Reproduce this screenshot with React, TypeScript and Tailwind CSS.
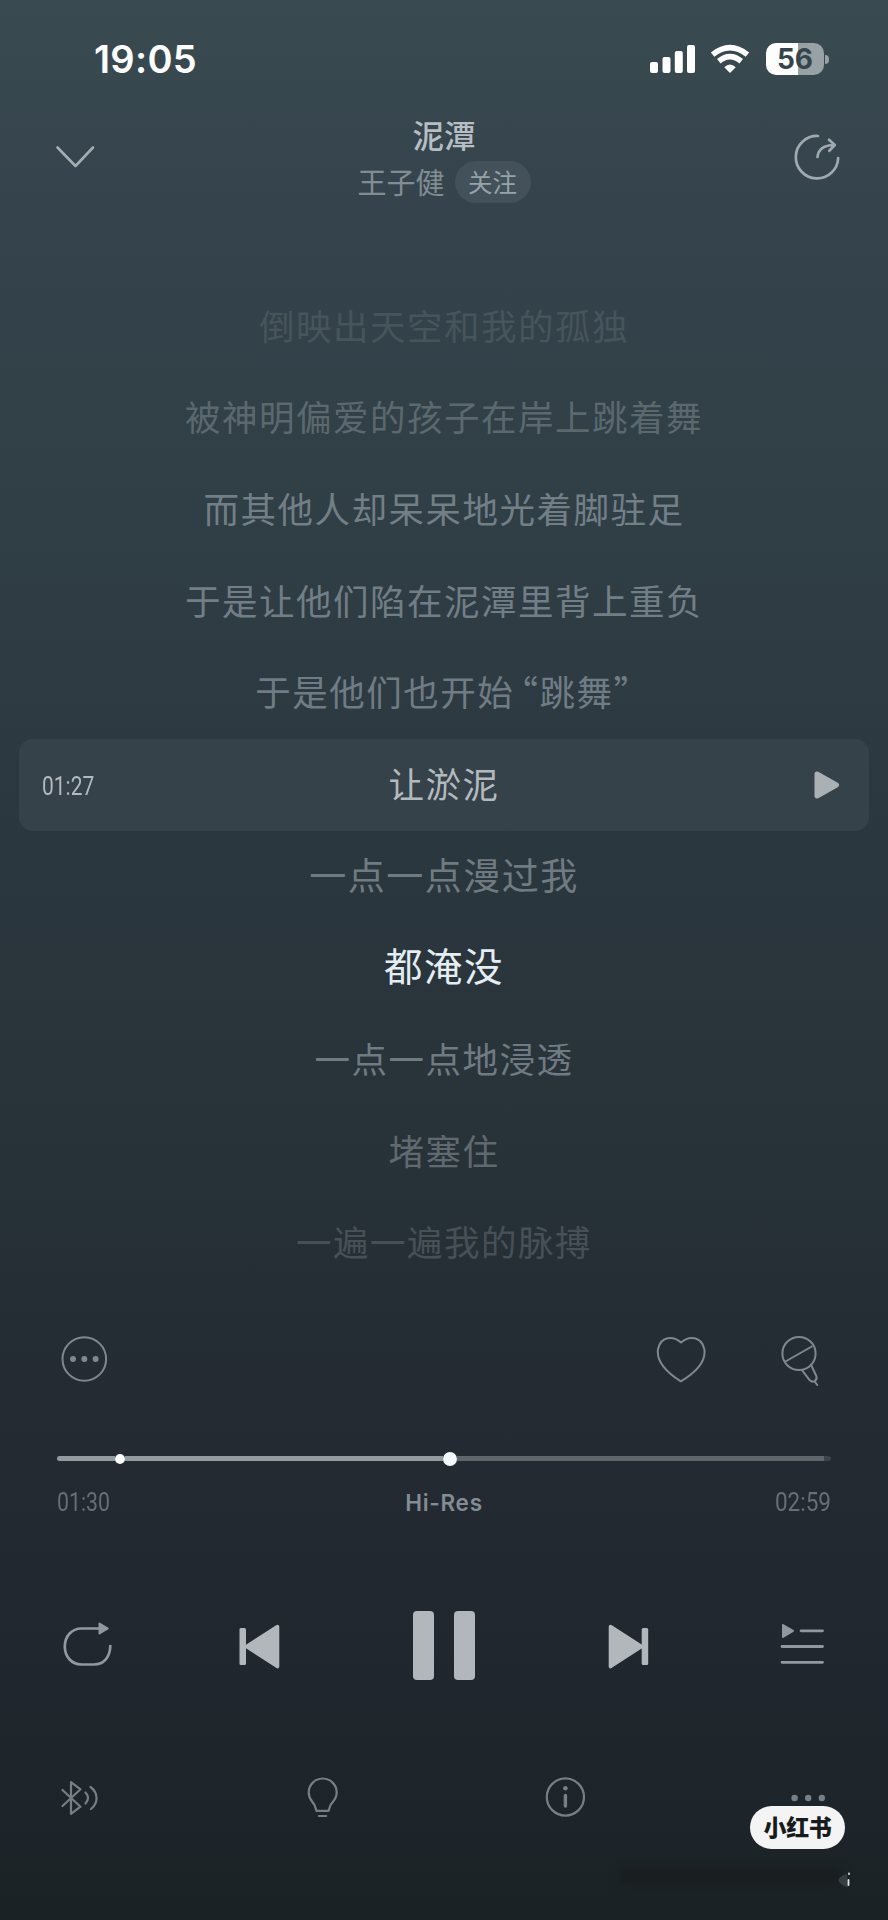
import type { ReactNode } from "react";

type IconProps = { box: string; className: string; children: ReactNode };

function Icon({ box, className, children }: IconProps) {
  return (
    <svg
      viewBox={box}
      className={`block shrink-0 ${className}`}
      fill="none"
      stroke="currentColor"
      strokeLinecap="round"
      strokeLinejoin="round"
    >
      {children}
    </svg>
  );
}

function StatusBar() {
  return (
    <div className="flex h-[96px] items-start justify-between pl-[94px] pr-[59px] text-white">
      <div className="mt-[36px] font-['Inter'] text-[38px] font-semibold leading-[46px] tracking-[0.3px]">19:05</div>
      <div className="mt-[43px] flex items-start">
        <Icon box="649 43 46 32" className="h-[32px] w-[46px]">
          <g fill="currentColor" stroke="none">
            <rect x="649" y="62" width="8" height="11" rx="2" />
            <rect x="661.5" y="57" width="8" height="16" rx="2" />
            <rect x="673.8" y="51" width="8" height="22" rx="2" />
            <rect x="686" y="45" width="8" height="28" rx="2" />
          </g>
        </Icon>
        <Icon box="710 43 40 32" className="ml-[14px] h-[32px] w-[40px]">
          <g strokeLinecap="butt" strokeWidth="5.6">
            <path d="M712.6 54.6 Q730 40.6 747.4 54.6" />
            <path d="M718.8 61.2 Q730 52.2 741.2 61.2" />
          </g>
          <path d="M730 73 L724.3 67.2 Q730 62 735.7 67.2 Z" fill="currentColor" stroke="none" />
        </Icon>
        <div className="ml-[16px] flex items-center">
          <div className="flex h-[32px] w-[58px] items-center justify-center rounded-[10px] bg-linear-to-r from-white from-[56%] to-[#98a1a4] to-[56%] font-['Inter'] text-[28px] font-bold leading-none tracking-[0px] text-[#36454d]">
            56
          </div>
          <div className="ml-[1px] h-[9px] w-[4px] rounded-r-full bg-[#98a1a4]" />
        </div>
      </div>
    </div>
  );
}

function Header() {
  return (
    <div className="flex h-[185px] items-start justify-between pl-[53px] pr-[46px]">
      <Icon box="53 142 45 30" className="mt-[46px] h-[30px] w-[45px] text-[#a3adb3]">
        <path d="M57.5 147.5 L75.5 166 L93 147.5" strokeWidth="2.6" />
      </Icon>
      <div className="ml-[-2px] flex flex-col items-center">
        <div className="mt-[17px] h-[42px] text-[31.5px] font-medium leading-[42px] text-[#b7bec3]">泥潭</div>
        <div className="mt-[6px] flex h-[42px] items-center">
          <span className="mt-[-2px] text-[29px] leading-[42px] text-[#828d93]">王子健</span>
          <span className="ml-[10px] flex h-[42px] w-[76px] items-center justify-center rounded-full bg-[#43515a] text-[24.5px] text-[#98a2a9]">
            关注
          </span>
        </div>
      </div>
      <Icon box="792 132 50 50" className="mt-[36px] h-[50px] w-[50px] text-[#a0a9af]">
        <path d="M818 136 A21.2 21.2 0 1 0 838.2 158" strokeWidth="2.7" />
        <path d="M817.5 157 Q818.5 145.5 834 145 M829 139.8 L834.8 145 L829.3 150.8" strokeWidth="2.7" />
      </Icon>
    </div>
  );
}

const rows = "flex h-[91.7px] items-center justify-center pb-[5px]";

function Lyrics() {
  return (
    <div className="flex flex-col text-[35.5px] font-normal leading-none tracking-[1.5px]">
      <div className={`${rows} text-[#46545b]`}>倒映出天空和我的孤独</div>
      <div className={`${rows} text-[#5b686e]`}>被神明偏爱的孩子在岸上跳着舞</div>
      <div className={`${rows} text-[#727f86]`}>而其他人却呆呆地光着脚驻足</div>
      <div className={`${rows} text-[#727e86]`}>于是让他们陷在泥潭里背上重负</div>
      <div className={`${rows} text-[#707c85]`}>
        <span>于是他们也开始</span>
        <span className="ml-[6px] [font-feature-settings:'halt']">“</span>
        <span>跳舞</span>
        <span className="[font-feature-settings:'halt']">”</span>
      </div>
      <div className="mx-[19px] flex h-[91.7px] items-center justify-between rounded-[14px] bg-[#36424a] pl-[23px] pr-[27px] text-[#b3babe]">
        <span className="mt-[3px] w-[60px] origin-left scale-x-[0.84] font-['Roboto'] text-[25px] font-normal tracking-[0px]">01:27</span>
        <span className="ml-[-26px] mt-[-5px]">让淤泥</span>
        <Icon box="812 768 30 36" className="h-[36px] w-[30px] text-[#aab1b5]">
          <path d="M817 775 L836.5 786 L817 797 Z" fill="currentColor" strokeWidth="5" />
        </Icon>
      </div>
      <div className={`${rows} text-[37px] text-[#707b81]`}>一点一点漫过我</div>
      <div className="flex h-[91.7px] items-center justify-center pb-[8px] text-[38.5px] text-[#e4edf2]">都淹没</div>
      <div className={`${rows} text-[#707a82]`}>一点一点地浸透</div>
      <div className={`${rows} text-[#60696f]`}>堵塞住</div>
      <div className={`${rows} text-[#474f57]`}>一遍一遍我的脉搏</div>
    </div>
  );
}

function Actions() {
  return (
    <div className="mt-[39px] flex h-[60px] items-center pl-[60px] pr-[64px] text-[#7f888f]">
      <Icon box="60 1335 48 48" className="h-[48px] w-[48px]">
        <circle cx="84.3" cy="1359" r="21.8" strokeWidth="2" />
        <g fill="currentColor" stroke="none">
          <circle cx="73" cy="1359" r="3" />
          <circle cx="84.3" cy="1359" r="3" />
          <circle cx="95.6" cy="1359" r="3" />
        </g>
      </Icon>
      <Icon box="654 1333 54 52" className="ml-auto h-[52px] w-[54px]">
        <path
          d="M681 1342.500 C673 1335.200 660.500 1336.500 658 1349 C656 1362 667 1372.500 680.800 1381.300 C695.500 1372.500 706.500 1362 704.300 1349 C701.500 1336.500 689.500 1335.200 681 1342.500 Z"
          strokeWidth="2"
        />
      </Icon>
      <Icon box="779 1332 45 54" className="ml-[71px] h-[54px] w-[45px]">
        <g strokeWidth="2">
          <circle cx="799" cy="1353.500" r="16.600" />
          <path d="M785.500 1361.500 L811.800 1346.500" />
          <path d="M802 1370.200 L809.800 1380.300 Q812.300 1382.600 815 1380.900 Q817.400 1379 816.300 1376 L811 1364.800" />
          <path d="M814.800 1381.500 L817.200 1385" />
        </g>
      </Icon>
    </div>
  );
}

function Progress() {
  return (
    <div className="mt-[63px] pl-[57px] pr-[57px]">
      <div className="flex h-[14px] items-center">
        <div className="h-[5px] w-[58px] rounded-l-full bg-[#949b9f]" />
        <div className="h-[10px] w-[10px] rounded-full bg-white" />
        <div className="h-[5px] w-[318px] bg-[#949b9f]" />
        <div className="h-[14px] w-[14px] rounded-full bg-[#f5fafc]" />
        <div className="h-[5px] w-[367px] bg-[#5f666c]" />
        <div className="h-[5px] flex-1 rounded-r-full bg-[#3c4349]" />
      </div>
      <div className="mt-[22px] flex h-[30px] items-center justify-between text-[#666f75]">
        <span className="w-[70px] origin-left scale-x-[0.85] font-['Roboto'] text-[25px] leading-[30px]">01:30</span>
        <span className="font-['Inter'] text-[22.500px] font-semibold leading-[30px] tracking-[0.700px] text-[#838c92]">Hi-Res</span>
        <span className="w-[70px] origin-right scale-x-[0.900] text-right font-['Roboto'] text-[25px] leading-[30px]">02:59</span>
      </div>
    </div>
  );
}

function Transport() {
  return (
    <div className="mt-[88px] flex h-[80px] items-center pl-[60px] pr-[60px] text-[#b1b7bb]">
      <Icon box="60 1617 54 56" className="h-[56px] w-[54px] text-[#91989e]">
        <path d="M99 1627.500 H81.500 C71.500 1627.500 64.800 1635.500 64.800 1645.500 C64.800 1655.500 71.500 1663.500 81.500 1663.500 H94 C104 1663.500 110 1656 110.300 1645" strokeWidth="2.700" />
        <path d="M99.500 1622.500 L107.800 1627.500 L99.500 1632.500 Z" fill="currentColor" strokeWidth="2" />
      </Icon>
      <Icon box="236 1617 46 56" className="ml-[122px] h-[56px] w-[46px]">
        <g fill="currentColor">
          <rect x="239.500" y="1627" width="6.500" height="37" rx="1.500" stroke="none" />
          <path d="M277.500 1625.500 L246.500 1645.500 L277.500 1665.500 Z" strokeWidth="3.600" />
        </g>
      </Icon>
      <div className="ml-[131px] flex gap-[20px]">
        <div className="h-[69px] w-[21px] rounded-[4px] bg-current" />
        <div className="h-[69px] w-[21px] rounded-[4px] bg-current" />
      </div>
      <Icon box="605 1617 46 56" className="ml-[130px] h-[56px] w-[46px]">
        <g fill="currentColor">
          <rect x="641.700" y="1627" width="6.500" height="37" rx="1.500" stroke="none" />
          <path d="M610.500 1625.500 L641.500 1645.500 L610.500 1665.500 Z" strokeWidth="3.600" />
        </g>
      </Icon>
      <Icon box="778 1617 50 56" className="ml-auto h-[56px] w-[50px] text-[#91989e]">
        <path d="M801 1629.800 H822.500 M782 1645.500 H822.500 M782 1661.300 H822.500" strokeWidth="2.800" />
        <path d="M783 1624 L793 1629.800 L783 1636 Z" fill="currentColor" strokeWidth="2" />
      </Icon>
    </div>
  );
}

function BottomBar() {
  return (
    <div className="relative mt-[87px] flex h-[50px] items-center pl-[58px] pr-[60px] text-[#777e84]">
      <Icon box="58 1778 42 40" className="h-[40px] w-[42px]">
        <g strokeWidth="2.200">
          <path d="M62.500 1790 L80.500 1806.700 L71 1813.800 V1782.200 L80.500 1789.300 L62.500 1806" />
          <path d="M85.500 1792.500 Q90.500 1798 85.500 1803.500" />
          <path d="M90.500 1787 C98.500 1793 98.500 1803 91 1809" />
        </g>
      </Icon>
      <Icon box="304 1776 38 46" className="ml-[204px] h-[46px] w-[38px]">
        <g strokeWidth="2.200">
          <path d="M316.500 1811.800 L314.500 1806 C312.500 1802.500 308.700 1800.500 308.700 1793.500 A14 14 0 0 1 336.700 1793.500 C336.700 1800.500 332.500 1802.500 330.500 1806 L328.500 1811.800 Z" />
          <path d="M318.800 1817 H326.200" />
        </g>
      </Icon>
      <Icon box="543 1776 45 45" className="ml-[201px] h-[45px] w-[45px]">
        <circle cx="565.400" cy="1798" r="18.600" strokeWidth="2.200" />
        <path d="M565.400 1796.500 V1807" strokeWidth="3.400" />
        <circle cx="565.400" cy="1789.300" r="2.300" fill="currentColor" stroke="none" />
      </Icon>
      <Icon box="788 1788 40 20" className="ml-auto h-[20px] w-[40px]">
        <g fill="currentColor" stroke="none">
          <circle cx="794.600" cy="1798" r="3.200" />
          <circle cx="808.200" cy="1798" r="3.200" />
          <circle cx="821.800" cy="1798" r="3.200" />
        </g>
      </Icon>
      <div className="absolute right-[43px] top-[33px] flex h-[43px] w-[95px] items-center justify-center rounded-full bg-[#f4f4f5] pb-[2px] text-[23px] font-black leading-none tracking-[-0.3px] text-[#161c1e]">
        小红书
      </div>
      <div className="absolute right-[44px] top-[94px] h-[18px] w-[226px] rounded-full bg-[#171a1b] opacity-60 blur-[5px]" />
      <div className="absolute right-[37px] top-[97px]">
        <Icon box="836 1870 15 18" className="h-[18px] w-[15px]">
          <path d="M838 1880 Q841 1875 847 1874 L848 1887 Q841 1886 838 1880 Z" fill="#363e40" stroke="none" />
          <path d="M849 1873.500 V1874 M848.500 1880 V1885" stroke="#dfe5e5" strokeWidth="1.800" />
        </Icon>
      </div>
    </div>
  );
}

export default function App() {
  return (
    <div className="h-[1920px] w-[888px] overflow-hidden bg-[linear-gradient(180deg,#3a4a51_0px,#35444c_210px,#303e46_520px,#2b373e_850px,#273138_1180px,#242b32_1400px,#20272e_1650px,#1d252b_1810px,#1b2224_1920px)] font-['Noto_Sans_CJK_SC',sans-serif]">
      <StatusBar />
      <Header />
      <Lyrics />
      <Actions />
      <Progress />
      <Transport />
      <BottomBar />
    </div>
  );
}
